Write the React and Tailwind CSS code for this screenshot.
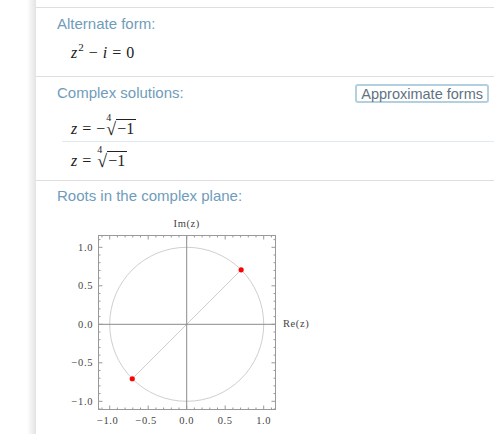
import React from "react";

const serif = { fontFamily: '"Liberation Serif", "Times New Roman", serif' };

const X0 = 186.7;
const Y0 = 324.3;
const R = 77;

const toX = (v) => X0 + v * R;
const toY = (v) => Y0 - v * R;

const Radical = ({ children }) => (
  <span className="relative inline-flex items-end pl-[1px]">
    <span className="absolute left-[1px] top-[-5px] text-[10px] leading-none">4</span>
    <span className="text-[18px] leading-[20px] relative top-[1px]">√</span>
    <span className="border-t border-[#222] leading-[18px] pl-[1px] pr-[2px]">{children}</span>
  </span>
);

const ComplexPlane = () => {
  const ticks = [];
  for (let i = -11; i <= 11; i++) {
    const v = i / 10;
    const major = i % 5 === 0;
    const len = major ? 4 : 2;
    const x = toX(v);
    const y = toY(v);
    ticks.push(
      <line key={`b${i}`} x1={x} y1={409.5} x2={x} y2={409.5 - len} />,
      <line key={`t${i}`} x1={x} y1={235.5} x2={x} y2={235.5 + len} />,
      <line key={`l${i}`} x1={98.5} y1={y} x2={98.5 + len} y2={y} />,
      <line key={`r${i}`} x1={275.5} y1={y} x2={275.5 - len} y2={y} />
    );
  }
  const yLabels = [
    [1, "1.0"],
    [0.5, "0.5"],
    [0, "0.0"],
    [-0.5, "\u22120.5"],
    [-1, "\u22121.0"],
  ];
  const xLabels = [
    [-1, "\u22121.0"],
    [-0.5, "\u22120.5"],
    [0, "0.0"],
    [0.5, "0.5"],
    [1, "1.0"],
  ];
  const a = Math.SQRT1_2;
  return (
    <svg width="270" height="222" viewBox="60 212 270 222" className="block">
      <g stroke="#cfcfcf" fill="none" strokeWidth="1">
        <circle cx={X0} cy={Y0} r={R} />
        <line x1={toX(a)} y1={toY(a)} x2={toX(-a)} y2={toY(-a)} />
      </g>
      <g stroke="#8a8a8a" strokeWidth="1">
        <line x1={X0} y1={235.5} x2={X0} y2={409.5} />
        <line x1={98.5} y1={Y0} x2={275.5} y2={Y0} />
      </g>
      <rect x="98.5" y="235.5" width="177" height="174" fill="none" stroke="#999" strokeWidth="1" />
      <g stroke="#999" strokeWidth="1">{ticks}</g>
      <circle cx={toX(a)} cy={toY(a)} r="2.6" fill="#ff0000" />
      <circle cx={toX(-a)} cy={toY(-a)} r="2.6" fill="#ff0000" />
      <g fill="#444" fontSize="10.5" style={serif} letterSpacing="0.6">
        <text x={X0} y={227} textAnchor="middle">Im(z)</text>
        <text x={283} y={327}>Re(z)</text>
        {yLabels.map(([v, t]) => (
          <text key={t} x={93} y={toY(v) + 3.5} textAnchor="end">{t}</text>
        ))}
        {xLabels.map(([v, t]) => (
          <text key={t} x={toX(v) + (v < 0 ? -2 : 0)} y={424} textAnchor="middle">{t}</text>
        ))}
      </g>
    </svg>
  );
};

export default function App() {
  return (
    <div className="flex w-[494px] h-[434px] overflow-hidden bg-white">
      {/* left gutter with shadow */}
      <div className="w-[36px] shrink-0 bg-gradient-to-r from-white via-white via-75% to-[#e3e3e3]" />

      <div className="flex-1 flex flex-col" style={{ fontFamily: '"Liberation Sans", Arial, sans-serif' }}>
        <div className="h-[7px]" />

        {/* Alternate form */}
        <section className="h-[69px] border-t border-[#dedede] pl-[21px] pt-[7px]">
          <h2 className="text-[15px] leading-[18px] text-[#6f9cba]">Alternate form:</h2>
          <div className="mt-[10px] pl-[14px] text-[16px] leading-[20px] text-[#222]" style={serif}>
            <i>z</i>
            <sup className="text-[11px] relative top-[-7px] ml-[1px]">2</sup>
            <span className="mx-[5px]">−</span>
            <i>i</i>
            <span className="mx-[5px]">=</span>0
          </div>
        </section>

        {/* Complex solutions */}
        <section className="h-[104px] border-t border-[#dedede] pt-[7px]">
          <div className="flex items-start justify-between pl-[21px] pr-[5px]">
            <h2 className="text-[15px] leading-[18px] text-[#6f9cba]">Complex solutions:</h2>
            <button className="h-[19px] px-[4px] border-2 border-[#b3d0de] rounded-[3px] bg-white text-[14.5px] leading-[14px] text-[#5f7282]">
              Approximate forms
            </button>
          </div>
          <div className="mt-[6px] ml-[26px] flex flex-col text-[#222]" style={serif}>
            <div className="pl-[9px] h-[33px] pt-[9px] text-[16px] leading-[20px] border-b border-[#deebf0]">
              <i>z</i>
              <span className="mx-[5px]">=</span>−<Radical>−1</Radical>
            </div>
            <div className="pl-[9px] pt-[8px] text-[16px] leading-[20px]">
              <i>z</i>
              <span className="mx-[5px]">=</span>
              <Radical>−1</Radical>
            </div>
          </div>
        </section>

        {/* Roots in the complex plane */}
        <section className="flex-1 border-t border-[#dedede] pt-[6px]">
          <h2 className="pl-[21px] text-[15px] leading-[18px] text-[#6f9cba]">Roots in the complex plane:</h2>
          <div className="mt-[7px] ml-[24px]">
            <ComplexPlane />
          </div>
        </section>
      </div>
    </div>
  );
}
